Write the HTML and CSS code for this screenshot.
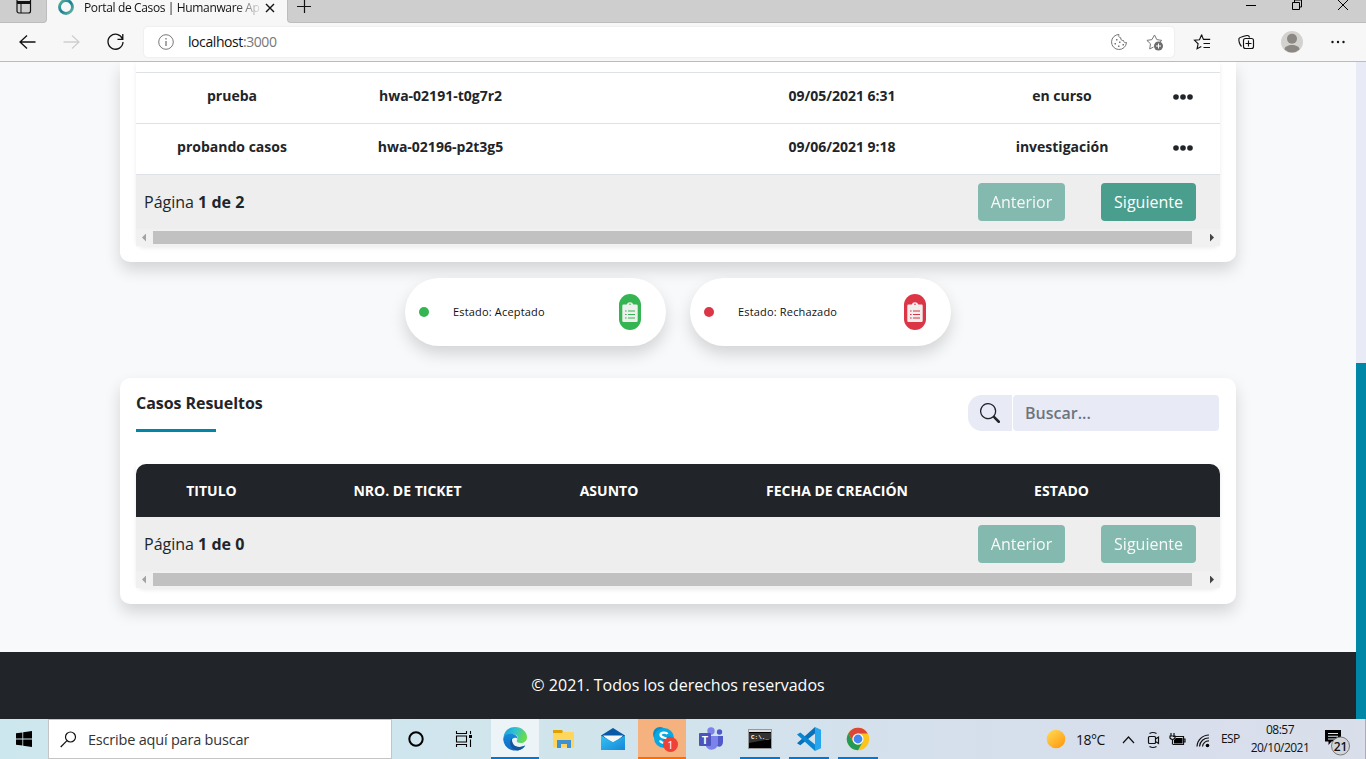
FILE: index.html
```html
<!DOCTYPE html>
<html lang="es">
<head>
<meta charset="utf-8">
<title>Portal de Casos | Humanware App</title>
<link rel="stylesheet" href="styles.css">
</head>
<body>
<svg width="0" height="0" class="defs">
  <defs>
    <linearGradient id="ring" x1="0" y1="0" x2="1" y2="1"><stop offset="0" stop-color="#5fb39b"/><stop offset=".5" stop-color="#168096"/><stop offset="1" stop-color="#70b8a4"/></linearGradient>
    <linearGradient id="sun" x1="0" y1="0" x2=".8" y2="1"><stop offset="0" stop-color="#ffdd55"/><stop offset="1" stop-color="#ff9a12"/></linearGradient>
    <linearGradient id="edgeTop" x1="0" y1="0" x2="1" y2=".3"><stop offset="0" stop-color="#1a98d8"/><stop offset=".5" stop-color="#2fc0d5"/><stop offset="1" stop-color="#66dc50"/></linearGradient>
    <linearGradient id="edgeLow" x1="0" y1="0" x2="0" y2="1"><stop offset="0" stop-color="#168bdc"/><stop offset="1" stop-color="#1169bf"/></linearGradient>
    <linearGradient id="mail" x1="0" y1="0" x2="1" y2="1"><stop offset="0" stop-color="#35c4f3"/><stop offset="1" stop-color="#1686d8"/></linearGradient>
    <symbol id="clip" viewBox="0 0 16 20"><path d="M1.500 2.500h3.200A3.400 3.400 0 0 1 8 .3a3.400 3.400 0 0 1 3.300 2.200h3.200q1.200 0 1.200 1.200v15q0 1.200-1.200 1.200h-13Q.3 19.900.3 18.700v-15Q.3 2.500 1.500 2.500z" fill="#efefef"/><path d="M6 9h7M6 12.500h7M6 16h7M3 9h1.600M3 12.500h1.600M3 16h1.600" stroke="currentColor" stroke-width="1.200"/><circle cx="8" cy="2.300" r=".8" fill="currentColor"/></symbol>
  </defs>
</svg>

<header class="tabstrip">
  <div class="tab-menu"><svg width="16" height="14" viewBox="0 0 16 14"><rect x="1" y="-2" width="13.500" height="15" rx="2" fill="none" stroke="#111" stroke-width="1.200"/><path d="M1 2.500h13.500" stroke="#111" stroke-width="3"/><path d="M5 3v10" stroke="#111"/></svg></div>
  <div class="tab">
    <svg width="18" height="18" viewBox="0 0 18 18"><circle cx="9" cy="9" r="6.500" fill="none" stroke="url(#ring)" stroke-width="2.900"/></svg>
    <span class="tab-title">Portal de Casos | Humanware Ap</span>
    <svg class="tab-close" width="10" height="10" viewBox="0 0 10 10"><path d="M1 1l8 8M9 1L1 9" stroke="#111" stroke-width="1.400"/></svg>
  </div>
  <div class="tab-new">
    <svg width="15" height="15" viewBox="0 0 15 15"><path d="M0 7.500h14M7.500 0v14" stroke="#111" stroke-width="1.200"/></svg>
  </div>
  <div class="window-controls">
    <svg width="104" height="14" viewBox="0 0 104 14"><g fill="none" stroke="#000"><path d="M0 6.500h10M46.500 3.500h7v7h-7zM48.500 3v-2h7v7h-2"/><path d="M92 1l10 10M102 1l-10 10"/></g></svg>
  </div>
</header>

<nav class="toolbar">
  <div class="nav-buttons">
    <svg width="106" height="20" viewBox="0 0 106 20"><g fill="none" stroke-width="1.300"><path d="M8 3.500L1 10l7 6.500M1 10h15.500" stroke="#111"/><path d="M53 3.500L60 10l-7 6.500M60 10H44.500" stroke="#cfcfcf"/><path d="M103.500 7A7.500 7.500 0 1 0 104 10M103.800 2v5.300h-5.300" stroke="#111"/></g></svg>
  </div>
  <div class="address">
    <svg width="16" height="16" viewBox="0 0 16 16"><circle cx="8" cy="8" r="7.300" fill="none" stroke="#777"/><path d="M8 7v5M8 4v1.400" stroke="#777" stroke-width="1.300"/></svg>
    <span class="url">localhost<span class="port">:3000</span></span>
    <svg class="address-icons" width="54" height="18" viewBox="0 0 54 18"><g fill="none" stroke="#777"><path d="M9 1.500a7.500 7.500 0 1 0 7.500 8c-2 .5-3-.5-3-2-2 .2-3-.8-2.600-2.600C9 4.800 8.300 3 9 1.500z"/><path d="M43.500 14l-3.800 2 .8-5.200-3.600-3.400 5-.8L44.500 2l2.300 4.600 5 .8-2.200 2.100"/></g><path d="M6 6h1.500v1.500H6zM4.500 10H6v1.500H4.500zM9 8.500h1.500V10H9zM8 12.500h1.500V14H8zM12.500 11H14v1.500h-1.500z" fill="#777"/><circle cx="48.500" cy="13" r="4.500" fill="#6c6c6c"/><path d="M46 13h5M48.500 10.500v5" stroke="#fff"/></svg>
  </div>
  <svg class="tool-icons" width="154" height="24" viewBox="0 0 154 24">
    <g fill="none" stroke="#111" stroke-width="1.150"><path d="M9.500 5.500l-1-.5-2 4.700-5 .6 3.600 3.500-1 5 4.200-2.200M8.500 5l2 4.400h6.700M10.500 13.500H17M10.500 17.500H17"/><path d="M48.500 16.500c-2-2-3-6-2.500-8 .4-1 1-1.500 8-3 1.500-.2 2.300.8 2.600 2"/><rect x="50.500" y="8.500" width="10" height="10" rx="2"/><path d="M55.500 10.500v6M52.500 13.500h6"/></g>
    <circle cx="99" cy="12" r="11" fill="#d3d2cf"/><circle cx="99" cy="8.800" r="5" fill="#8b8783"/><path d="M91.500 19.500c0-6 15-6 15 0a11 11 0 0 1-15 0z" fill="#8b8783"/>
    <g fill="#111"><circle cx="139.500" cy="12" r="1.200"/><circle cx="145" cy="12" r="1.200"/><circle cx="150.500" cy="12" r="1.200"/></g>
  </svg>
</nav>

<div class="viewport">
  <div class="page">
    <main class="content">
      <section class="card card-open">
        <div class="table">
          <div class="row row-cut"></div>
          <div class="row"><span>prueba</span><span>hwa-02191-t0g7r2</span><span></span><span>09/05/2021 6:31</span><span>en curso</span><span class="dots"><svg width="20" height="6" viewBox="0 0 20 6"><circle cx="3" cy="3" r="2.800"/><circle cx="10" cy="3" r="2.800"/><circle cx="17" cy="3" r="2.800"/></svg></span></div>
          <div class="row"><span>probando casos</span><span>hwa-02196-p2t3g5</span><span></span><span>09/06/2021 9:18</span><span>investigación</span><span class="dots"><svg width="20" height="6" viewBox="0 0 20 6"><circle cx="3" cy="3" r="2.800"/><circle cx="10" cy="3" r="2.800"/><circle cx="17" cy="3" r="2.800"/></svg></span></div>
          <div class="pager pager-line"><span class="pager-text">Página <b>1 de 2</b></span><button class="btn btn-prev off">Anterior</button><button class="btn btn-next">Siguiente</button></div>
          <div class="hscroll"><i class="arrow-left"></i><div class="hthumb"></div><i class="arrow-right"></i></div>
        </div>
      </section>

      <div class="legend">
        <div class="pill accepted"><i class="dot"></i><span>Estado: Aceptado</span><div class="badge"><svg width="16" height="20"><use href="#clip"/></svg></div></div>
        <div class="pill rejected"><i class="dot"></i><span>Estado: Rechazado</span><div class="badge"><svg width="16" height="20"><use href="#clip"/></svg></div></div>
      </div>

      <section class="card card-solved">
        <div class="card-head">
          <h2 class="title">Casos Resueltos</h2>
          <div class="search">
            <div class="search-icon"><svg width="20" height="20" viewBox="0 0 16 16"><path fill="#212529" d="M11.742 10.344a6.500 6.500 0 1 0-1.397 1.398h-.001c.03.04.062.078.098.115l3.850 3.850a1 1 0 0 0 1.415-1.414l-3.850-3.850a1.007 1.007 0 0 0-.115-.1zM12 6.500a5.500 5.500 0 1 1-11 0 5.500 5.500 0 0 1 11 0z"/></svg></div>
            <div class="search-input">Buscar...</div>
          </div>
        </div>
        <div class="table table-solved">
          <div class="thead"><span>TITULO</span><span>NRO. DE TICKET</span><span>ASUNTO</span><span>FECHA DE CREACIÓN</span><span>ESTADO</span></div>
          <div class="pager"><span class="pager-text">Página <b>1 de 0</b></span><button class="btn btn-prev off">Anterior</button><button class="btn btn-next off">Siguiente</button></div>
          <div class="hscroll"><i class="arrow-left"></i><div class="hthumb"></div><i class="arrow-right"></i></div>
        </div>
      </section>
    </main>
    <footer class="footer">© 2021. Todos los derechos reservados</footer>
  </div>
  <div class="vscroll"><div class="vthumb"></div></div>
</div>

<div class="taskbar">
  <div class="start"><svg width="16" height="16" viewBox="0 0 16 16"><path d="M0 2.300L6.400 1.400v6.100H0zM7.200 1.200L16 0v7.500H7.200zM0 8.400h6.400v6.200L0 13.700zM7.200 8.400H16V16l-8.800-1.200z"/></svg></div>
  <div class="task-search"><svg width="17" height="17" viewBox="0 0 17 17"><circle cx="10.500" cy="6" r="5" fill="none" stroke="#111" stroke-width="1.200"/><path d="M7 9.700L.7 16" stroke="#111" stroke-width="1.200"/></svg><span>Escribe aquí para buscar</span></div>
  <div class="apps">
    <div class="app"><svg width="16" height="16" viewBox="0 0 16 16"><circle cx="8" cy="8" r="6.700" fill="none" stroke="#000" stroke-width="2"/></svg></div>
    <div class="app"><svg width="18" height="16" viewBox="0 0 18 16"><path d="M1.500 0v2.500h10V0M1.500 16v-2.500h10V16M1.500 5h10v6h-10zM15.500 0v3M15.500 8.500V16" fill="none" stroke="#000" stroke-width="1.100"/><path d="M14 4h3v3h-3z"/></svg></div>
    <div class="app active"><svg width="24" height="24" viewBox="0 0 24 24"><path d="M.5 11C1 4 6 0 12 0c7 0 12 5 12 10 0 4-3 6-6 6-3.500 0-5-1.500-4-2.800 2-3-.5-6-4-6C5.500 7.200 1.500 9 .5 11z" fill="url(#edgeTop)"/><path d="M.2 12C.7 8.500 4 6.700 8 6.700c4 0 6.800 2.500 6.500 5.300-1.300-2-6-1.500-6 2.500 0 4.500 5 7 9.500 5.500 2-.6 3.500-1.600 4.200-1.500C18 26 1.500 26 .2 12z" fill="url(#edgeLow)"/><path d="M9 11c-4 5-1 12 6 12.600 3-.7 5.800-2.600 7.200-5.100-7 3.500-14 .5-13.200-7.500z" fill="#14559f"/></svg></div>
    <div class="app"><svg width="22" height="18" viewBox="0 0 22 18"><path d="M0 0h9l1.500 2H21v15.500H0z" fill="#ffd65c"/><path d="M0 0h9l1 2-1.500 1H0z" fill="#dfa000"/><path d="M4 18v-8h14v8h-4v-4H8v4z" fill="#3d91d4"/></svg></div>
    <div class="app"><svg width="24" height="22" viewBox="0 0 24 22"><path d="M0 7.500L12 0l12 7.500V12H0z" fill="#0758a6"/><path d="M2 7.500h20L12 16z" fill="#f4f6f8"/><path d="M0 7.500L12 14l12-6.500V22H0z" fill="url(#mail)"/><path d="M2.500 8.200h19L12 13.800z" fill="#f4f6f8"/></svg></div>
    <div class="app alert"><svg width="26" height="26" viewBox="0 0 26 26"><circle cx="8" cy="8" r="7" fill="#078ecb"/><circle cx="12" cy="12" r="10" fill="#08a9e2"/><circle cx="17" cy="17" r="6.500" fill="#0787c5"/><path d="M15.500 8c-1-2-7-2.200-7 1 0 3.500 7.500 2 7.500 5.500 0 3.200-7 3-8 0" fill="none" stroke="#fff" stroke-width="2.300"/><circle cx="18.500" cy="18.500" r="7.500" fill="#ef4136"/><text x="18.500" y="22.500" class="count">1</text></svg></div>
    <div class="app"><svg width="26" height="24" viewBox="0 0 26 24"><circle cx="13" cy="4" r="3.700" fill="#7b83eb"/><circle cx="21.500" cy="5" r="2.700" fill="#5059c9"/><path d="M17 9h8v6c0 5-5 6-7 3z" fill="#5059c9"/><path d="M7 9h13v7c0 8-11 9-12.500 2z" fill="#7b83eb"/><rect x="1" y="6" width="12" height="13" rx="1" fill="#4b53bc"/><text x="7" y="16.500" class="team">T</text></svg></div>
    <div class="app running"><svg width="24" height="20" viewBox="0 0 24 20"><path d="M.5.500h23v19H.5z" fill="#000" stroke="#999"/><path d="M1 1h22v2H1z" fill="#ddd"/><path d="M1 4h22v6L1 14z" fill="#333"/><text x="3" y="10" class="cmd">C:\._</text></svg></div>
    <div class="app running"><svg width="24" height="24" viewBox="0 0 24 24"><path d="M18 0l6 2.800v18.400L18 24z" fill="#27a6ed"/><path d="M18 0v6.500L3.300 18.300 0 16.300z" fill="#0871b9"/><path d="M0 7.500l3.300-2L18 17.500V24z" fill="#0986d1"/></svg></div>
    <div class="app running"><svg width="24" height="24" viewBox="0 0 24 24"><circle cx="12" cy="12" r="11.200" fill="#fbc51c"/><path d="M2.300 6.400A11.200 11.200 0 0 1 21.700 6.400H12a5.600 5.600 0 0 0-4.900 8.400z" fill="#dc4638"/><path d="M2.300 6.400A11.200 11.200 0 0 0 12 23.200l4.900-8.400a5.600 5.600 0 0 1-9.800 0z" fill="#229b58"/><circle cx="12" cy="12" r="5.500" fill="#fff"/><circle cx="12" cy="12" r="4.400" fill="#4286f4"/></svg></div>
  </div>
  <div class="tray">
    <svg width="20" height="20" viewBox="0 0 20 20"><circle cx="10" cy="10" r="9.300" fill="url(#sun)"/></svg>
    <span class="temp">18°C</span>
    <svg class="tray-icons" width="88" height="18" viewBox="0 0 88 18"><g fill="none" stroke="#111" stroke-width="1.200"><path d="M1 12l5.500-6 5.500 6"/><rect x="26.500" y="5.500" width="7" height="7" rx="1"/><path d="M33.500 8l3-2v6.500l-3-2M27.500 2.500q3.500-2 7 0M27.500 15.500q3.500 2 7 0"/><path d="M51 5.500h10.500v8H51M61.500 8H63v3h-1.500M49 2v3M52 2v3M48 5h5v2q-2.500 3-5 0zM50.500 9v4.500"/><path d="M75 15.500A12 12 0 0 1 87 4M77.500 15.500A9 9 0 0 1 87 7M80.500 15.500A6 6 0 0 1 87 10"/></g><path d="M54 7h6.500v5.500H52V9z"/><circle cx="85.500" cy="14.500" r="1.800"/></svg>
    <span class="lang">ESP</span>
    <div class="clock"><span>08:57</span><span>20/10/2021</span></div>
    <div class="notify"><svg width="28" height="28" viewBox="0 0 28 28"><path d="M1 1h16v11.500H7.500L4.500 16v-3.500H1z"/><path d="M4 4.500h10M4 7.200h10M4 10h7" stroke="#dbe3ec" stroke-width="1.100"/><circle cx="16.500" cy="17" r="9" fill="#d2d5d7" stroke="#777"/><text x="16.500" y="21.500" class="notify-count">21</text></svg></div>
  </div>
</div>
</body>
</html>
```
FILE: styles.css
```css
* { box-sizing: border-box; }
body {
  margin: 0;
  width: 1366px;
  height: 759px;
  overflow: hidden;
  display: flex;
  flex-direction: column;
  font-family: "Open Sans", "Noto Sans", sans-serif;
  color: #212529;
}
svg { display: block; flex: none; }
.defs { position: absolute; }

/* Browser chrome */
.tabstrip { height: 23px; flex: none; display: flex; background: #f7f7f7; font-size: 12px; color: #111; }
.tab-menu { width: 47px; background: #cecece; border-right: 1px solid #bdbdbd; border-bottom: 1px solid #bdbdbd; border-bottom-right-radius: 4px; padding-left: 16px; }
.tab { width: 240px; display: flex; padding-left: 10px; }
.tab > svg:first-child { margin-top: -2px; }
.tab-title { width: 176px; margin-left: 9px; line-height: 15px; white-space: nowrap; font-size: 12px; letter-spacing: -.36px; -webkit-mask-image: linear-gradient(90deg, #000 150px, rgba(0, 0, 0, .15) 174px); mask-image: linear-gradient(90deg, #000 150px, rgba(0, 0, 0, .15) 174px); }
.tab-close { margin: 3px 0 0 5px; }
.tab-new { flex: 1; background: #cecece; border-left: 1px solid #bdbdbd; border-bottom: 1px solid #bdbdbd; border-bottom-left-radius: 4px; padding-left: 9px; }
.tab-new svg { margin-top: -1px; }
.window-controls { width: 120px; background: #cecece; border-bottom: 1px solid #bdbdbd; }
.window-controls svg { margin-top: -1px; }
.toolbar { height: 39px; flex: none; display: flex; background: #f7f7f7; border-bottom: 1px solid #bcbcbc; padding-top: 4px; }
.nav-buttons { width: 144px; padding: 5px 0 0 19px; }
.address { width: 1030px; height: 30px; background: #fff; border-radius: 4px; box-shadow: 0 0 2px #ddd; display: flex; align-items: center; padding-left: 14px; }
.url { margin: -1px 0 0 14px; font-size: 14px; letter-spacing: -.42px; color: #111; }
.port { color: #777; }
.address-icons { margin: 0 10px 0 auto; }
.tool-icons { margin: 3px 0 0 19px; }

/* Page */
.viewport { height: 657px; flex: none; display: flex; background: #f8f9fb; }
.page { width: 1356px; height: 657px; overflow: hidden; display: flex; flex-direction: column; }
.content { width: 1116px; margin: 0 auto; height: 590px; flex: none; }
.card { background: #fff; border-radius: 10px; padding: 0 16px 16px; box-shadow: 0 8px 16px rgba(0, 0, 0, .15); }
.card-open { height: 200px; border-radius: 0 0 10px 10px; }
.table { box-shadow: 0 2px 4px rgba(0, 0, 0, .08); border-radius: 0 0 8px 8px; }
.row { height: 51px; border-top: 1px solid #dee2e6; display: grid; grid-template-columns: 192px 225px 147px 284px 156px 80px; text-align: center; font-size: 14px; font-weight: 700; line-height: 46px; }
.row-cut { height: 10px; border-top: 0; }
.dots { display: flex; align-items: center; padding: 0 0 3px 33px; fill: #212529; }
.pager { height: 54px; background: #eee; display: flex; align-items: center; padding-left: 8px; font-size: 16px; }
.pager-line { height: 55px; border-top: 1px solid #dee2e6; }
.pager-text { width: 834px; font-weight: 400; }
.pager-text b { font-weight: 700; }
.btn { height: 38px; border: 0; border-radius: 4px; background: #4a9e8d; color: #fff; font-family: inherit; font-size: 16px; padding: 0 0 1px; }
.btn-prev { width: 87px; margin-right: 36px; }
.btn-next { width: 95px; }
.off { opacity: .65; }
.hscroll { height: 17px; background: #f1f1f1; display: flex; align-items: center; padding-left: 6px; }
.hthumb { width: 1039px; height: 13px; background: #c1c1c1; }
.arrow-left { width: 4px; height: 8px; margin-right: 7px; background: #a3a3a3; clip-path: polygon(100% 0, 0 50%, 100% 100%); }
.arrow-right { width: 4px; height: 8px; margin-left: 18px; background: #444; clip-path: polygon(0 0, 100% 50%, 0 100%); }

.legend { display: flex; gap: 24px; padding: 16px 0 32px 285px; }
.pill { width: 261px; height: 68px; border-radius: 34px; background: #fff; box-shadow: 0 8px 16px rgba(0, 0, 0, .15); display: flex; align-items: center; padding-left: 14px; font-size: 11px; color: #111; }
.pill span { width: 166px; margin-left: 24px; padding-bottom: 2px; letter-spacing: .17px; }
.dot { width: 10px; height: 10px; border-radius: 50%; background: currentColor; }
.badge { width: 22px; height: 36px; border-radius: 11px; display: flex; align-items: center; justify-content: center; }
.accepted .dot, .accepted .badge { background: #34b552; color: #34b552; }
.rejected .dot, .rejected .badge { background: #dc3545; color: #dc3545; }

.card-solved { height: 226px; }
.card-head { height: 86px; display: flex; justify-content: space-between; padding: 17px 1px 0 0; }
.title { margin: -3px 0 0; height: 40px; font-size: 16px; line-height: 22px; font-weight: 700; letter-spacing: -.05px; }
.title::after { content: ""; display: block; width: 80px; height: 3px; margin-top: 15px; background: #0086a6; }
.search { height: 36px; display: flex; gap: 1px; }
.search-icon { width: 44px; background: #e8eaf6; border-radius: 14px 0 0 14px; display: flex; align-items: center; justify-content: center; }
.search-input { width: 206px; background: #e8eaf6; border-radius: 4px; color: #6c757d; font-size: 16px; font-weight: 600; line-height: 36px; padding-left: 12px; }
.thead { height: 53px; background: #212529; border-radius: 10px 10px 0 0; color: #fff; display: grid; grid-template-columns: 151px 241px 162px 294px 155px; text-align: center; font-size: 14px; font-weight: 700; line-height: 54px; }
.footer { height: 67px; flex: none; background: #212529; color: #fff; text-align: center; line-height: 66px; font-size: 16px; }
.vscroll { width: 10px; background: #e8eaf6; padding-top: 301px; }
.vthumb { height: 356px; background: #0086a6; }

/* Taskbar */
.taskbar { height: 40px; flex: none; display: flex; background: linear-gradient(90deg, #cde7ef, #d1e4ec 45%, #d6dfec 75%, #dadeeb); color: #111; }
.start { width: 48px; padding: 12px 0 0 16px; }
.task-search { width: 344px; background: #fff; border: 1px solid #c5c5c5; display: flex; align-items: center; padding-left: 11px; font-size: 14.5px; color: #333; }
.task-search span { margin-left: 11px; letter-spacing: -.2px; }
.apps { display: flex; gap: 1px; }
.app { width: 48px; height: 40px; display: flex; align-items: center; justify-content: center; border-bottom: 2px solid transparent; padding-top: 2px; }
.app:nth-child(2) { margin-right: 1px; padding-right: 2px; }
.running { width: 40px; margin: 0 4px; border-bottom-color: #0078d7; }
.active { background: #edf4f8; border-bottom-color: #0078d7; }
.alert { background: #f6b27e; border-bottom-color: #ff6c00; }
.alert svg { margin-left: 5px; }
.count { font: 11px "Open Sans", sans-serif; fill: #fff; text-anchor: middle; }
.team { font: bold 11px "Open Sans", sans-serif; fill: #fff; text-anchor: middle; }
.cmd { font: bold 6px "Liberation Mono", monospace; fill: #fff; }
.tray { margin-left: auto; width: 320px; display: flex; align-items: center; font-size: 12px; }
.temp { width: 46px; margin-left: 10px; font-size: 14px; letter-spacing: -.5px; padding-top: 1px; }
.tray-icons { margin-top: 1px; }
.lang { width: 26px; margin-left: 11px; letter-spacing: -.6px; padding-bottom: 1px; }
.clock { width: 70px; display: flex; flex-direction: column; align-items: center; margin-left: -2px; line-height: 18px; letter-spacing: -.5px; padding-bottom: 1px; }
.notify { width: 51px; height: 40px; padding: 10px 0 0 9px; border-right: 1px solid #aab; }
.notify-count { font: 600 12px "Open Sans", sans-serif; fill: #111; text-anchor: middle; }
```
